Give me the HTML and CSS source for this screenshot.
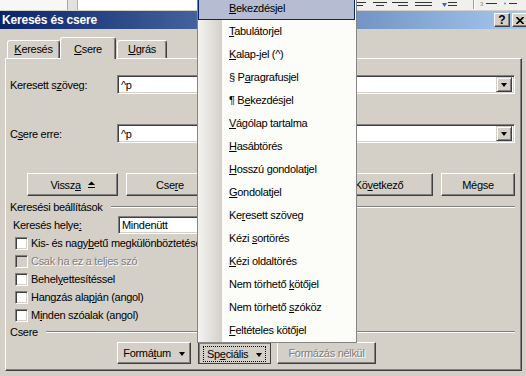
FILE: index.html
```html
<!DOCTYPE html>
<html lang="hu">
<head>
    <meta charset="UTF-8">
    <title>Keresés és csere</title>
    <link rel="stylesheet" href="styles.css">
</head>
<body>

    <!-- Word eszköztár a háttérben -->
    <div class="toolbar">
        <div class="tb-left"></div>
        <div class="tb-drop"></div>
        <div class="tb-font"></div>
        <div class="tb-spacer"></div>
        <svg class="tb-icons" width="169" height="10" viewBox="0 0 169 10">
            <g stroke="#333" stroke-width="1">
                <path d="M0 2.5h9M0 5.5h6"/>
                <path d="M16 2.5h14M19 5.5h8"/>
                <path d="M35 2.5h16M41 5.5h10"/>
                <path d="M58 2.5h17M58 5.5h17"/>
                <path d="M91 2.5h9M91 5.5h9"/>
                <path d="M129 3.5h11M152 3.5h8"/>
            </g>
            <path d="M85 3h5l-2.5 4z" fill="#3a62c8"/>
            <path d="M116.5 0v9" stroke="#a0a0a0"/>
            <path d="M117.5 0v9" stroke="#fff"/>
            <text x="123" y="6" font-size="6" fill="#888" font-family="Liberation Sans">3</text>
            <circle cx="148" cy="3.5" r="1" fill="#888"/>
        </svg>
    </div>

    <div class="dialog">
        <div class="titlebar">
            <span class="title">Keresés és csere</span>
            <span class="tbtn">?</span>
            <span class="tbtn tbtn-close">
                <svg width="8" height="7" viewBox="0 0 8 7"><path d="M0.5 0l7 7M7.5 0l-7 7" stroke="#000" stroke-width="1.6"/></svg>
            </span>
        </div>

        <!-- Fülek -->
        <div class="tabs">
            <div class="tab tab-find"><u>K</u>eresés</div>
            <div class="tab tab-active"><u>C</u>sere</div>
            <div class="tab tab-goto"><u>U</u>grás</div>
        </div>

        <div class="panel">
            <div class="field-row">
                <label class="field-label">Keresett s<u>z</u>öveg:</label>
                <div class="combo">
                    <span>^p</span>
                    <span class="combo-btn"><i class="arrow"></i></span>
                </div>
            </div>

            <div class="field-row field-row-second">
                <label class="field-label">C<u>s</u>ere erre:</label>
                <div class="combo">
                    <span>^p</span>
                    <span class="combo-btn"><i class="arrow"></i></span>
                </div>
            </div>

            <div class="button-row">
                <button class="btn btn-less">Vissz<u>a</u>
                    <svg class="less-icon" width="7" height="7" viewBox="0 0 7 7"><path d="M0 4h7L3.5 0.5z" fill="#000"/><path d="M0 6.5h7" stroke="#000"/></svg>
                </button>
                <button class="btn btn-replace">Cse<u>r</u>e</button>
                <!-- a menü alatt, nem látszik -->
                <button class="btn btn-all"></button>
                <button class="btn btn-next">Kö<u>v</u>etkező</button>
                <button class="btn btn-cancel">Mégse</button>
            </div>

            <div class="group-title">
                <span class="caption caption-search">Keresési beállítások</span>
                <span class="line"></span>
            </div>

            <div class="where-row">
                <label class="where-label">Keresés helye<u>:</u></label>
                <div class="select">Mindenütt</div>
            </div>

            <div class="check-row"><span class="checkbox"></span><span>Kis- és nagy<u>b</u>etű megkülönböztetése</span></div>
            <div class="check-row disabled"><span class="checkbox"></span><span>Csak ha ez a teljes szó</span></div>
            <div class="check-row"><span class="checkbox"></span><span>Behel<u>y</u>ettesítéssel</span></div>
            <div class="check-row"><span class="checkbox"></span><span>Hangzás ala<u>p</u>ján (angol)</span></div>
            <div class="check-row"><span class="checkbox"></span><span>M<u>i</u>nden szóalak (angol)</span></div>

            <div class="group-title group-replace">
                <span class="caption caption-replace">Csere</span>
                <span class="line"></span>
            </div>

            <div class="bottom-row">
                <button class="btn btn-format">Formá<u>t</u>um <i class="arrow"></i></button>
                <button class="btn btn-special btn-pressed"><span class="focus">Sp<u>e</u>ciális <i class="arrow"></i></span></button>
                <button class="btn btn-noformat btn-disabled">Formázás nélkül</button>
            </div>
        </div>
    </div>

    <!-- Speciális menü -->
    <div class="menu">
        <div class="menu-item menu-item-hot"><u>B</u>ekezdésjel</div>
        <div class="menu-item"><u>T</u>abulátorjel</div>
        <div class="menu-item"><u>K</u>alap-jel (^)</div>
        <div class="menu-item">§ P<u>a</u>ragrafusjel</div>
        <div class="menu-item">¶ B<u>e</u>kezdésjel</div>
        <div class="menu-item"><u>V</u>ágólap tartalma</div>
        <div class="menu-item"><u>H</u>asábtörés</div>
        <div class="menu-item"><u>H</u>osszú gondolatjel</div>
        <div class="menu-item"><u>G</u>ondolatjel</div>
        <div class="menu-item">Ke<u>r</u>esett szöveg</div>
        <div class="menu-item">Kézi <u>s</u>ortörés</div>
        <div class="menu-item"><u>K</u>ézi oldaltörés</div>
        <div class="menu-item">Nem törhető <u>k</u>ötőjel</div>
        <div class="menu-item">Nem törhető <u>s</u>zóköz</div>
        <div class="menu-item"><u>F</u>eltételes kötőjel</div>
    </div>

</body>
</html>
```

FILE: styles.css
```css
body {
    margin: 0;
    width: 526px;
    height: 376px;
    overflow: hidden;
    position: relative;
    background-color: #d4d0c8;
    font-family: "Liberation Sans", Arial, sans-serif;
    font-size: 11px;
    letter-spacing: -0.3px;
    color: #000;
}

u {
    text-decoration: underline;
    text-underline-offset: 1px;
}

/* eszköztár */
.toolbar {
    display: flex;
    height: 10px;
    background-color: #f1f0ec;
}

.tb-left {
    width: 67px;
    background-color: #f7f7f5;
}

.tb-drop {
    width: 9px;
    background-color: #e4e2dc;
    border-left: 1px solid #a8a8a8;
    border-right: 1px solid #a8a8a8;
}

.tb-font {
    width: 119px;
    background-color: #fff;
}

.tb-spacer {
    flex: 1;
}

.tb-icons {
    display: block;
}

/* ablak */
.dialog {
    width: 530px;
    padding-top: 1px;
}

.titlebar {
    display: flex;
    align-items: center;
    height: 18px;
    padding: 0 2px;
    background: linear-gradient(to right, #0a246a, #a6caf0);
    color: #fff;
}

.title {
    flex: 1;
    font-size: 12px;
    font-weight: bold;
    letter-spacing: -0.2px;
}

.tbtn {
    display: flex;
    align-items: center;
    justify-content: center;
    width: 14px;
    height: 12px;
    margin-left: 2px;
    background-color: #d4d0c8;
    border: 1px solid;
    border-color: #fff #404040 #404040 #fff;
    box-shadow: inset -1px -1px #808080;
    color: #000;
    font-weight: bold;
    font-size: 12px;
    letter-spacing: 0;
}

/* fülek */
.tabs {
    display: flex;
    align-items: flex-end;
    height: 21px;
    margin: 8px 0 0 7px;
}

.tab {
    height: 17px;
    line-height: 17px;
    text-align: center;
    background-color: #d4d0c8;
    border: 1px solid;
    border-color: #fff #404040 transparent #fff;
    border-bottom: none;
    border-radius: 3px 3px 0 0;
    box-shadow: inset -1px 0 #808080;
}

.tab-find {
    width: 51px;
}

.tab-active {
    position: relative;
    z-index: 1;
    width: 54px;
    height: 19px;
    line-height: 18px;
    padding-top: 2px;
    margin-bottom: -1px;
}

.tab-goto {
    width: 48px;
    margin-left: 1px;
}

.panel {
    box-sizing: border-box;
    width: 517px;
    height: 313px;
    margin-left: 5px;
    padding: 16px 6px 0 4px;
    border: 1px solid;
    border-color: #fff #404040 #404040 #fff;
    box-shadow: inset -1px -1px #808080;
}

.field-row {
    display: flex;
    align-items: center;
    height: 19px;
}

.field-row-second {
    margin-top: 30px;
}

.field-label {
    width: 107px;
}

.combo,
.select {
    box-sizing: border-box;
    display: flex;
    align-items: center;
    height: 19px;
    padding: 0 2px 0 3px;
    background-color: #fff;
    border: 1px solid;
    border-color: #808080 #fff #fff #808080;
    box-shadow: inset 1px 1px #404040, inset -1px -1px #d4d0c8;
}

.combo {
    flex: 1;
}

.combo-btn {
    display: flex;
    align-items: center;
    justify-content: center;
    box-sizing: border-box;
    width: 16px;
    height: 15px;
    margin-left: auto;
    background-color: #d4d0c8;
    border: 1px solid;
    border-color: #d4d0c8 #404040 #404040 #d4d0c8;
    box-shadow: inset 1px 1px #fff, inset -1px -1px #808080;
}

.arrow {
    display: inline-block;
    width: 0;
    height: 0;
    border-left: 3.5px solid transparent;
    border-right: 3.5px solid transparent;
    border-top: 4px solid #000;
    vertical-align: middle;
}

/* gombok */
.button-row {
    display: flex;
    gap: 8px;
    margin-top: 30px;
    padding-left: 17px;
}

.btn {
    box-sizing: border-box;
    height: 23px;
    padding: 0;
    background-color: #d4d0c8;
    border: 1px solid;
    border-color: #fff #404040 #404040 #fff;
    box-shadow: inset -1px -1px #808080;
    font-family: inherit;
    font-size: 11px;
    letter-spacing: -0.3px;
    color: #000;
}

.btn-less { width: 91px; }
.btn-replace { width: 88px; }
.btn-all { width: 83px; }
.btn-next { width: 120px; padding-left: 12px; }
.btn-cancel { width: 74px; }

.less-icon {
    margin-left: 4px;
    vertical-align: 1px;
}

.group-title {
    display: flex;
    align-items: center;
    height: 14px;
    margin-top: 4px;
}

.group-replace {
    margin-top: 1px;
}

.caption-search {
    width: 101px;
}

.caption-replace {
    width: 36px;
}

.line {
    flex: 1;
    border-top: 1px solid #808080;
    border-bottom: 1px solid #fff;
}

.where-row {
    display: flex;
    align-items: center;
    height: 18px;
    margin-top: 2px;
}

.where-label {
    width: 105px;
    padding-left: 3px;
}

.select {
    width: 150px;
    height: 18px;
}

.check-row {
    display: flex;
    align-items: center;
    gap: 3px;
    height: 18px;
    padding-left: 5px;
}

.checkbox {
    box-sizing: border-box;
    width: 13px;
    height: 13px;
    background-color: #fff;
    border: 1px solid;
    border-color: #808080 #fff #fff #808080;
    box-shadow: inset 1px 1px #404040, inset -1px -1px #d4d0c8;
}

.disabled {
    color: #808080;
    text-shadow: 1px 1px #fff;
}

.disabled .checkbox {
    background-color: #d4d0c8;
}

.bottom-row {
    display: flex;
    margin-top: 3px;
    padding-left: 107px;
}

.bottom-row .btn {
    height: 22px;
}

.btn-format { width: 74px; }
.btn-special { width: 73px; margin-left: 7px; }
.btn-noformat { width: 99px; margin-left: 6px; }

.btn .arrow {
    margin-left: 5px;
}

.btn-pressed {
    border-color: #404040;
    box-shadow: inset 1px 1px #808080;
    padding-top: 1px;
}

.focus {
    display: inline-block;
    padding: 1px 3px;
    border: 1px dotted #000;
}

.btn-disabled {
    color: #808080;
    text-shadow: 1px 1px #fff;
}

/* menü */
.menu {
    position: absolute;
    left: 197px;
    top: -4px;
    width: 158px;
    border: 1px solid #868686;
    background: linear-gradient(to right, #f4f3ef, #d4d1ca) 0 0 / 24px 100% no-repeat, #fcfcf9;
}

.menu-item {
    height: 23px;
    line-height: 23px;
    padding-left: 31px;
    white-space: nowrap;
}

.menu-item-hot {
    height: 21px;
    line-height: 21px;
    padding-left: 30px;
    margin-right: 1px;
    background-color: #b6bdd2;
    border: 1px solid #0a246a;
}
```
